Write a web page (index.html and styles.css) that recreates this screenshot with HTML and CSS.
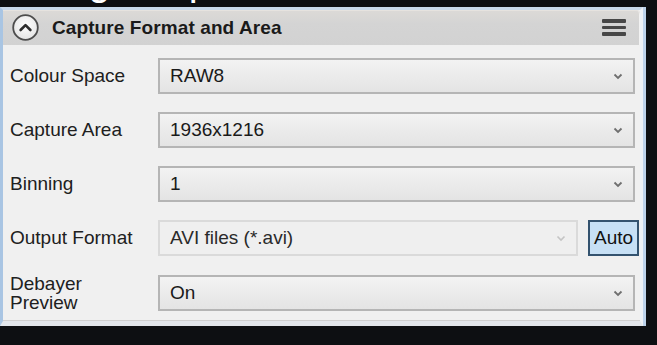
FILE: index.html
```html
<!DOCTYPE html>
<html>
<head>
<meta charset="utf-8">
<link rel="stylesheet" href="styles.css">
</head>
<body>
<div class="hero"><p class="hero-text">Setting Capture Format</p></div>
<section class="panel">
  <header class="panel-head">
    <span class="collapse">
      <svg width="27" height="27" viewBox="0 0 27 27">
        <defs>
          <radialGradient id="cg" cx="50%" cy="40%" r="60%">
            <stop offset="0" stop-color="#ffffff"/>
            <stop offset="1" stop-color="#e4e4e4"/>
          </radialGradient>
        </defs>
        <circle cx="13.5" cy="13.5" r="12.3" fill="url(#cg)" stroke="#4d4d4d" stroke-width="1.8"/>
        <polyline points="8.6,16 13.5,11.1 18.4,16" fill="none" stroke="#2e2e2e" stroke-width="2.6" stroke-linecap="round" stroke-linejoin="round"/>
      </svg>
    </span>
    <span class="head-title">Capture Format and Area</span>
    <span class="menu"><i></i><i></i><i></i></span>
  </header>
  <div class="panel-body">
    <div class="row">
      <span class="label">Colour Space</span>
      <div class="combo"><span class="value">RAW8</span><svg class="chev" width="10" height="7" viewBox="0 0 10 7"><polyline points="1.5,1.5 5,5 8.5,1.5" fill="none" stroke="#6f6f6f" stroke-width="1.8"/></svg></div>
    </div>
    <div class="row">
      <span class="label">Capture Area</span>
      <div class="combo"><span class="value">1936x1216</span><svg class="chev" width="10" height="7" viewBox="0 0 10 7"><polyline points="1.5,1.5 5,5 8.5,1.5" fill="none" stroke="#6f6f6f" stroke-width="1.8"/></svg></div>
    </div>
    <div class="row">
      <span class="label">Binning</span>
      <div class="combo"><span class="value">1</span><svg class="chev" width="10" height="7" viewBox="0 0 10 7"><polyline points="1.5,1.5 5,5 8.5,1.5" fill="none" stroke="#6f6f6f" stroke-width="1.8"/></svg></div>
    </div>
    <div class="row">
      <span class="label">Output Format</span>
      <div class="combo-wrap">
        <div class="combo disabled"><span class="value">AVI files (*.avi)</span><svg class="chev" width="10" height="7" viewBox="0 0 10 7"><polyline points="1.5,1.5 5,5 8.5,1.5" fill="none" stroke="#c4c4c4" stroke-width="1.6"/></svg></div>
        <button class="auto">Auto</button>
      </div>
    </div>
    <div class="row">
      <span class="label two">Debayer<br>Preview</span>
      <div class="combo"><span class="value">On</span><svg class="chev" width="10" height="7" viewBox="0 0 10 7"><polyline points="1.5,1.5 5,5 8.5,1.5" fill="none" stroke="#6f6f6f" stroke-width="1.8"/></svg></div>
    </div>
  </div>
</section>
</body>
</html>
```

FILE: styles.css
```css
html, body {
  margin: 0;
  padding: 0;
}
body {
  background: #0d0f12;
  width: 657px;
  height: 345px;
  overflow: hidden;
  font-family: "Liberation Sans", Arial, sans-serif;
}
.hero {
  height: 7px;
  overflow: hidden;
}
.hero-text {
  margin: -39px 0 0 -14px;
  font-size: 40px;
  line-height: 40px;
  word-spacing: 16px;
  color: #ffffff;
  white-space: nowrap;
}
.panel {
  width: 637px;
  border-left: 3px solid #a9c5e3;
  border-right: 3px solid #eef1f5;
  border-top: 3px solid #c7d8ea;
  border-bottom: 5px solid #e2e6eb;
  box-shadow: 3px 0 0 #bdd3eb;
  background: #f0f0f0;
}
.panel-head {
  height: 35px;
  display: flex;
  align-items: center;
  padding: 0 14px 0 9px;
  background: linear-gradient(#dcdad7, #d4d4d4 40%, #d2d2d2);
  border-top-right-radius: 4px;
  box-shadow: inset 0 1px 0 #e6e3df, inset -1px 0 0 #f2f2f2;
}
.collapse {
  display: flex;
  width: 27px;
  height: 27px;
}
.head-title {
  margin-left: 13px;
  font-weight: bold;
  font-size: 19px;
  letter-spacing: 0.1px;
  color: #1a1a1a;
  flex: 1;
}
.menu {
  display: flex;
  flex-direction: column;
  gap: 3px;
}
.menu i {
  display: block;
  width: 24px;
  height: 3.5px;
  background: #474747;
  border-radius: 1px;
}
.panel-body {
  display: flex;
  flex-direction: column;
  gap: 18px;
  padding: 13px 5px 10px 7px;
  border-bottom: 1px solid #cfcfcf;
}
.row {
  display: grid;
  grid-template-columns: 148px 1fr;
  align-items: center;
  height: 36px;
}
.label {
  font-size: 19px;
  color: #202020;
  line-height: 20px;
  white-space: nowrap;
}
.label.two {
  line-height: 19px;
}
.combo {
  height: 36px;
  box-sizing: border-box;
  border: 2px solid #b5b5b5;
  background: linear-gradient(#f3f3f3, #ebebeb 50%, #e4e4e4);
  display: flex;
  align-items: center;
  padding: 0 10px 0 10px;
}
.combo .value {
  flex: 1;
  font-size: 19px;
  color: #1a1a1a;
}
.combo-wrap {
  display: flex;
  align-items: center;
  gap: 10px;
  margin-right: -4px;
}
.combo.disabled {
  flex: 1;
  border-color: #dadada;
  background: #efefef;
}
.combo.disabled .value {
  color: #2a2a2a;
}
.auto {
  width: 51px;
  height: 36px;
  box-sizing: border-box;
  border: 2px solid #34536f;
  background: #c7e0f5;
  font-family: "Liberation Sans", Arial, sans-serif;
  font-size: 19px;
  color: #111;
  padding: 0;
}
```
